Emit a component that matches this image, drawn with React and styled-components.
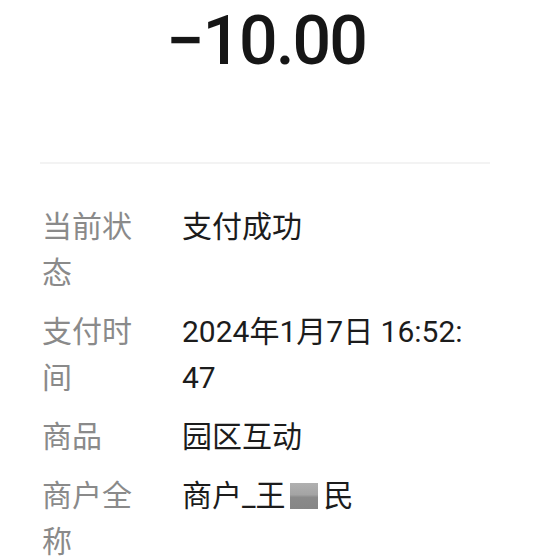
import React from "react";
import styled, { createGlobalStyle } from "styled-components";

const Global = createGlobalStyle`
  html, body { margin: 0; padding: 0; background: #ffffff; }
  body { font-family: Roboto, "Noto Sans CJK SC", sans-serif; }
`;

const Page = styled.div`
  width: 554px;
  min-height: 559px;
  box-sizing: border-box;
  padding: 6px 64px 0 40px;
  background: #fff;
`;

const Amount = styled.div`
  text-align: center;
  font-family: Roboto, sans-serif;
  font-size: 68px;
  line-height: 70px;
  font-weight: 500;
  color: #161616;
  letter-spacing: -2px;
  padding-left: 2px;
`;

const Divider = styled.div`
  height: 2px;
  background: #f3f3f3;
  margin-top: 86px;
`;

const List = styled.div`
  display: flex;
  flex-direction: column;
  gap: 13px;
  padding-top: 40px;
  padding-left: 2px;
`;

const Row = styled.div`
  display: flex;
  gap: 30px;
  font-size: 30px;
  line-height: 46px;
`;

const Label = styled.div`
  flex: 0 0 110px;
  color: #8a8a8a;
  word-break: break-all;
`;

const Value = styled.div`
  flex: 1;
  color: #1c1c1c;
  overflow-wrap: anywhere;
`;

const Mask = styled.span`
  display: inline-block;
  width: 28px;
  height: 26px;
  margin: 0 6px 0 4px;
  vertical-align: -3px;
  background: linear-gradient(to bottom, #b0b0b0 0%, #a4a4a4 45%, #8a8a8a 55%, #868686 100%);
  filter: blur(0.6px);
`;

const rows = [
  { label: "当前状态", value: "支付成功" },
  { label: "支付时间", value: "2024年1月7日 16:52:\u200B47" },
  { label: "商品", value: "园区互动" },
  {
    label: "商户全称",
    value: (
      <>
        商户_王<Mask />民
      </>
    ),
  },
];

export default function App() {
  return (
    <>
      <Global />
      <Page>
        <Amount>−10.00</Amount>
        <Divider />
        <List>
          {rows.map((r, i) => (
            <Row key={i}>
              <Label>{r.label}</Label>
              <Value>{r.value}</Value>
            </Row>
          ))}
        </List>
      </Page>
    </>
  );
}
